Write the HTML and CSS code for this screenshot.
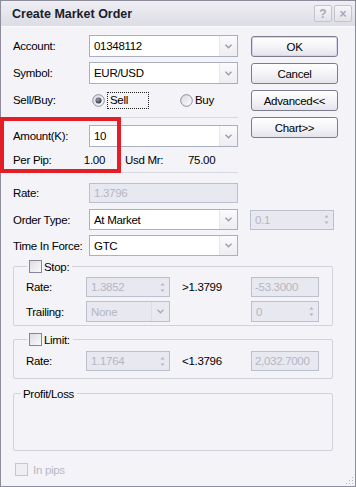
FILE: index.html
```html
<!DOCTYPE html>
<html lang="en">
<head>
    <meta charset="UTF-8">
    <title>Create Market Order</title>
    <link rel="stylesheet" href="styles.css">
</head>
<body>
<div class="window">
    <div class="titlebar">
        <span class="title">Create Market Order</span>
        <span class="tbtn">?</span>
        <span class="tbtn">&times;</span>
    </div>

    <div class="content">
        <div class="top">
            <div class="fields">
                <div class="row">
                    <span class="lbl">Account:</span>
                    <div class="combo"><span class="val">01348112</span><span class="arrow"><svg width="7" height="5" viewBox="0 0 7 5"><polyline points="0.5,0.8 3.5,3.8 6.5,0.8" fill="none" stroke="#9c9caa" stroke-width="1.4"/></svg></span></div>
                </div>
                <div class="row">
                    <span class="lbl">Symbol:</span>
                    <div class="combo"><span class="val">EUR/USD</span><span class="arrow"><svg width="7" height="5" viewBox="0 0 7 5"><polyline points="0.5,0.8 3.5,3.8 6.5,0.8" fill="none" stroke="#9c9caa" stroke-width="1.4"/></svg></span></div>
                </div>
                <div class="row">
                    <span class="lbl">Sell/Buy:</span>
                    <svg class="radio" width="13" height="13" viewBox="0 0 13 13">
                        <defs>
                            <linearGradient id="rg" x1="0" y1="0" x2="1" y2="1"><stop offset="0" stop-color="#d8d8e0"/><stop offset="1" stop-color="#fdfdff"/></linearGradient>
                            <radialGradient id="dot" cx="0.4" cy="0.35" r="0.7"><stop offset="0" stop-color="#9c9cac"/><stop offset="1" stop-color="#2c2c3c"/></radialGradient>
                        </defs>
                        <circle cx="6.5" cy="6.5" r="5.8" fill="url(#rg)" stroke="#8c8c9c" stroke-width="1"/>
                        <circle cx="6.5" cy="6.5" r="3" fill="url(#dot)"/>
                    </svg>
                    <span class="focus">Sell</span>
                    <svg class="radio buy" width="13" height="13" viewBox="0 0 13 13">
                        <circle cx="6.5" cy="6.5" r="5.8" fill="url(#rg)" stroke="#8c8c9c" stroke-width="1"/>
                    </svg>
                    <span class="rtext">Buy</span>
                </div>
                <div class="sep"></div>
                <div class="row">
                    <span class="lbl">Amount(K):</span>
                    <div class="combo"><span class="val">10</span><span class="arrow"><svg width="7" height="5" viewBox="0 0 7 5"><polyline points="0.5,0.8 3.5,3.8 6.5,0.8" fill="none" stroke="#9c9caa" stroke-width="1.4"/></svg></span></div>
                </div>
                <div class="info">
                    <span class="pp-lbl">Per Pip:</span>
                    <span class="pp-val">1.00</span>
                    <span class="mr-lbl">Usd Mr:</span>
                    <span class="mr-val">75.00</span>
                </div>
                <div class="sep short"></div>
            </div>

            <div class="buttons">
                <div class="btn default">OK</div>
                <div class="btn">Cancel</div>
                <div class="btn">Advanced&lt;&lt;</div>
                <div class="btn">Chart&gt;&gt;</div>
            </div>
        </div>

        <div class="lower">
            <div class="row r-rate">
                <span class="lbl">Rate:</span>
                <div class="field off wide">1.3796</div>
            </div>
            <div class="row">
                <span class="lbl">Order Type:</span>
                <div class="combo"><span class="val">At Market</span><span class="arrow"><svg width="7" height="5" viewBox="0 0 7 5"><polyline points="0.5,0.8 3.5,3.8 6.5,0.8" fill="none" stroke="#9c9caa" stroke-width="1.4"/></svg></span></div>
                <div class="field off spin big"><span class="val">0.1</span><span class="spn"><svg width="5" height="11" viewBox="0 0 5 11"><path d="M2.5 1 L4.5 3.5 L0.5 3.5 Z M2.5 10 L4.5 7.5 L0.5 7.5 Z" fill="#b4b4c0"/></svg></span></div>
            </div>
            <div class="row">
                <span class="lbl">Time In Force:</span>
                <div class="combo"><span class="val">GTC</span><span class="arrow"><svg width="7" height="5" viewBox="0 0 7 5"><polyline points="0.5,0.8 3.5,3.8 6.5,0.8" fill="none" stroke="#9c9caa" stroke-width="1.4"/></svg></span></div>
            </div>

            <div class="group stop">
                <div class="legend"><span class="check"></span><span>Stop:</span></div>
                <div class="grow">
                    <span class="glbl">Rate:</span>
                    <div class="field off spin"><span class="val">1.3852</span><span class="spn"><svg width="5" height="11" viewBox="0 0 5 11"><path d="M2.5 1 L4.5 3.5 L0.5 3.5 Z M2.5 10 L4.5 7.5 L0.5 7.5 Z" fill="#b4b4c0"/></svg></span></div>
                    <span class="cmp">&gt;1.3799</span>
                    <div class="field off small">-53.3000</div>
                </div>
                <div class="grow">
                    <span class="glbl">Trailing:</span>
                    <div class="field off spin"><span class="val">None</span><span class="arrow dim"><svg width="7" height="5" viewBox="0 0 7 5"><polyline points="0.5,0.8 3.5,3.8 6.5,0.8" fill="none" stroke="#a8a8b6" stroke-width="1.4"/></svg></span></div>
                    <span class="cmp"></span>
                    <div class="field off spin small"><span class="val">0</span><span class="spn"><svg width="5" height="11" viewBox="0 0 5 11"><path d="M2.5 1 L4.5 3.5 L0.5 3.5 Z M2.5 10 L4.5 7.5 L0.5 7.5 Z" fill="#b4b4c0"/></svg></span></div>
                </div>
            </div>

            <div class="group limit">
                <div class="legend"><span class="check"></span><span>Limit:</span></div>
                <div class="grow">
                    <span class="glbl">Rate:</span>
                    <div class="field off spin"><span class="val">1.1764</span><span class="spn"><svg width="5" height="11" viewBox="0 0 5 11"><path d="M2.5 1 L4.5 3.5 L0.5 3.5 Z M2.5 10 L4.5 7.5 L0.5 7.5 Z" fill="#b4b4c0"/></svg></span></div>
                    <span class="cmp">&lt;1.3796</span>
                    <div class="field off small">2,032.7000</div>
                </div>
            </div>

            <div class="group pl">
                <div class="legend text">Profit/Loss</div>
            </div>

            <div class="pips"><span class="check off"></span><span>In pips</span></div>
        </div>
    </div>

    <svg class="grip" width="10" height="10" viewBox="0 0 10 10"><path d="M8 2h1v1H8zM5 5h1v1H5zM8 5h1v1H8zM2 8h1v1H2zM5 8h1v1H5zM8 8h1v1H8z" fill="#b8b8c4"/></svg>
</div>

<!-- highlight drawn over the screenshot -->
<div class="mark"></div>
</body>
</html>
```

FILE: styles.css
```css
*{
    box-sizing: border-box;
}
html,body{
    margin: 0;
    padding: 0;
}
body{
    background: #fff;
    font-family: "Liberation Sans", Arial, sans-serif;
    font-size: 11.5px;
    letter-spacing: -0.3px;
    color: #000;
    position: relative;
}
.window{
    width: 356px;
    height: 487px;
    border: 1px solid #8c8c9a;
    background: #f3f3f8;
    position: relative;
}
.titlebar{
    height: 26px;
    background: linear-gradient(#eeeef3, #dcdce5);
    border-bottom: 1px solid #fbfbfd;
    display: flex;
    align-items: center;
    padding: 0 3px 0 11px;
}
.title{
    flex: 1;
    font-weight: bold;
    font-size: 12.5px;
    letter-spacing: 0;
    color: #1c1c2a;
}
.tbtn{
    width: 18px;
    height: 17px;
    margin-left: 2px;
    border: 1px solid #c4c4ce;
    border-radius: 2px;
    background: linear-gradient(#f6f6f9, #e2e2ea);
    color: #a8a8b4;
    font-weight: bold;
    font-size: 12px;
    letter-spacing: 0;
    display: flex;
    align-items: center;
    justify-content: center;
}
.content{
    padding: 8px 0 0 12px;
}
.top{
    display: flex;
}
.fields{
    width: 225px;
}
.buttons{
    width: 87px;
    margin-left: 13px;
    padding-top: 1px;
    display: flex;
    flex-direction: column;
    gap: 6px;
}
.btn{
    height: 21px;
    border: 1px solid #7c7c8e;
    border-radius: 3px;
    background: linear-gradient(#ffffff, #f4f4f8 50%, #e4e4ec);
    display: flex;
    align-items: center;
    justify-content: center;
}
.btn.default{
    box-shadow: inset 0 0 0 1px #d4d6f0;
}
.row{
    display: flex;
    align-items: center;
    height: 22px;
}
.row + .row{
    margin-top: 5px;
}
.lbl{
    width: 76px;
    flex: none;
    white-space: nowrap;
}
.combo{
    width: 149px;
    height: 22px;
    border: 1px solid #aab0c2;
    background: #fff;
    display: flex;
    align-items: center;
}
.val{
    flex: 1;
    padding-left: 4px;
    white-space: nowrap;
}
.arrow{
    width: 18px;
    height: 100%;
    border-left: 1px solid #e6e6ec;
    background: linear-gradient(#fbfbfd, #ededf2);
    display: flex;
    align-items: center;
    justify-content: center;
}
.arrow.dim{
    background: #e9e9f0;
    border-left-color: #dcdce4;
}
.radio{
    margin-left: 3px;
    flex: none;
}
.radio.buy{
    margin-left: 31px;
}
.focus{
    margin-left: 2px;
    width: 42px;
    height: 17px;
    padding-left: 2px;
    border: 1px dotted #222;
    display: flex;
    align-items: center;
}
.rtext{
    margin-left: 2px;
}
.sep{
    height: 1px;
    background: #d9d9e2;
    margin: 6px 0 7px;
}
.sep.short{
    margin: 2px 0 0 107px;
}
.info{
    height: 20px;
    margin-top: 3px;
    display: flex;
    align-items: center;
}
.pp-lbl{
    width: 60px;
}
.pp-val{
    width: 32px;
    text-align: right;
}
.mr-lbl{
    margin-left: 20px;
    width: 63px;
}
.lower{
    margin-top: 10px;
}
.lower .row{
    height: 21px;
}
.lower .combo{
    height: 21px;
}
.row.r-rate{
    height: 20px;
}
.row.r-rate + .row{
    margin-top: 6px;
}
.field{
    height: 20px;
    display: flex;
    align-items: center;
    white-space: nowrap;
}
.field.off{
    border: 1px solid #bcc0ce;
    background: #e8e8f0;
    color: #b6b6c2;
}
.field.wide{
    width: 149px;
    padding-left: 4px;
}
.field.big{
    width: 89px;
    margin-left: 12px;
}
.spn{
    width: 13px;
    display: flex;
    justify-content: center;
}
.group{
    width: 320px;
    border: 1px solid #d2d2da;
    border-radius: 2px;
}
.group.stop{
    margin-top: 10px;
    padding-bottom: 3px;
}
.group.limit{
    margin-top: 13px;
    padding-bottom: 7px;
}
.group.pl{
    margin-top: 14px;
    height: 58px;
}
.legend{
    width: max-content;
    margin: -7px 0 0 13px;
    height: 13px;
    padding: 0 3px 0 2px;
    background: #f3f3f8;
    display: flex;
    align-items: center;
    gap: 2px;
}
.legend.text{
    margin-left: 7px;
    height: 14px;
}
.check{
    width: 13px;
    height: 13px;
    border: 1px solid #868696;
    background: linear-gradient(135deg, #dcdce4, #fafafc);
    flex: none;
}
.check.off{
    border-color: #c6c6d0;
    background: #eeeef3;
}
.grow{
    display: flex;
    align-items: center;
    height: 20px;
    padding-left: 12px;
    margin-top: 4px;
}
.grow + .grow{
    height: 21px;
}
.grow + .grow .field{
    height: 21px;
}
.glbl{
    width: 60px;
}
.field.spin{
    width: 84px;
}
.cmp{
    width: 81px;
    padding-left: 12px;
}
.field.small{
    width: 68px;
    padding-left: 3px;
}
.field.spin.small{
    padding-left: 0;
}
.limit .grow{
    margin-top: 5px;
}
.pips{
    margin: 12px 0 0 2px;
    display: flex;
    align-items: center;
    gap: 5px;
    color: #b8b8c4;
}
.grip{
    position: absolute;
    right: 1px;
    bottom: 1px;
}
.mark{
    position: absolute;
    left: 0;
    top: 117px;
    width: 121px;
    height: 56px;
    border: 4px solid #e31e27;
}
```
